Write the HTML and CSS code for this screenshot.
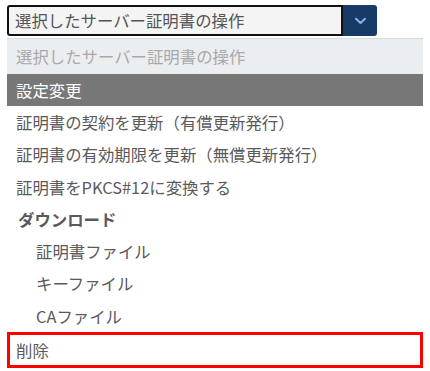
FILE: index.html
```html
<!DOCTYPE HTML>
<html>
  <head>
  <meta charset="utf-8" />
  <link rel="stylesheet" href="styles.css">
  </head>
  <body>
    <div class="picker">
      <div class="select">
        <div class="select-value">選択したサーバー証明書の操作</div>
        <div class="select-btn">
          <svg width="13" height="8" viewBox="0 0 13 8"><path d="M2 1.8 L6.5 6 L11 1.8" fill="none" stroke="#7fb2e5" stroke-width="2.2" stroke-linecap="round" stroke-linejoin="round"/></svg>
        </div>
      </div>
      <ul class="options">
        <li class="placeholder">選択したサーバー証明書の操作</li>
        <li class="group-head">設定変更</li>
        <li>証明書の契約を更新（有償更新発行）</li>
        <li>証明書の有効期限を更新（無償更新発行）</li>
        <li>証明書をPKCS#12に変換する</li>
        <li class="sub-head">ダウンロード</li>
        <li class="sub">証明書ファイル</li>
        <li class="sub">キーファイル</li>
        <li class="sub">CAファイル</li>
        <li class="marked">削除</li>
      </ul>
    </div>
  </body>
</html>
```

FILE: styles.css
```css
body {
  margin: 0;
  background: #fff;
  font-family: "Noto Sans CJK JP", "Noto Sans", sans-serif;
  font-size: 16.4px;
  color: #5a5a5a;
}
.picker {
  padding: 5px 0 0 7px;
  width: 416px;
}
.select {
  display: flex;
  height: 31px;
}
.select-value {
  box-sizing: border-box;
  width: 336px;
  border: 2px solid #111;
  border-radius: 3px 0 0 3px;
  background: #f4f4f4;
  padding-left: 6px;
  line-height: 27px;
  color: #555;
}
.select-btn {
  width: 34px;
  background: #173a66;
  border-radius: 0 3px 3px 0;
  display: flex;
  align-items: center;
  justify-content: center;
}
.options {
  list-style: none;
  margin: 2px 0 0 0;
  padding: 0;
  border-top: 1px solid #d6d9dd;
}
.options li {
  height: 32.3px;
  line-height: 32.3px;
  padding-left: 9px;
  white-space: nowrap;
}
.options .placeholder {
  height: 35px;
  line-height: 35px;
  background: #ebeef1;
  color: #a9a9a9;
}
.options .group-head {
  height: 32px;
  line-height: 32px;
  background: #777;
  color: #fff;
}
.options .sub-head {
  font-weight: bold;
  padding-left: 11px;
}
.options .sub {
  padding-left: 29px;
}
.options .marked {
  box-sizing: border-box;
  height: 36px;
  line-height: 30px;
  border: 3px solid #f00;
  padding-left: 6px;
}
```
